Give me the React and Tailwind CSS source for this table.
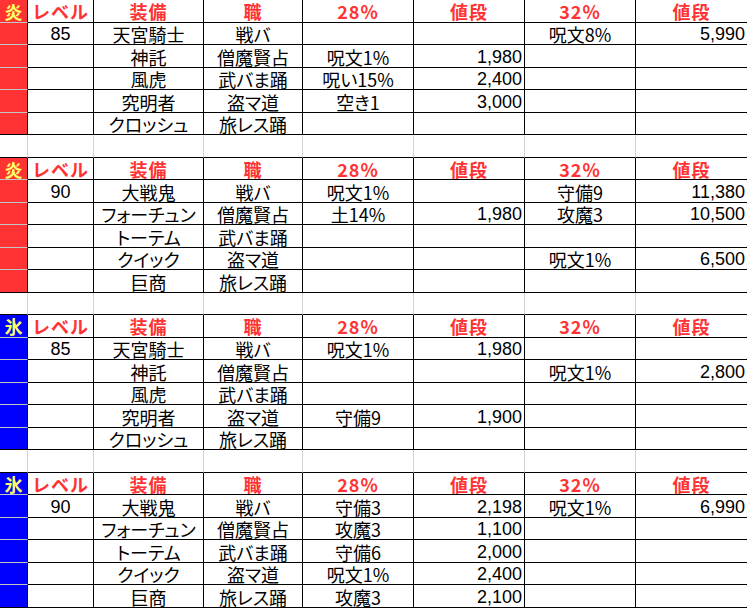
import React from 'react';

const blocks = [
  {
    mark: '炎',
    level: '85',
    rows: [
      ['天宮騎士', '戦バ', '', '', '呪文8%', '5,990'],
      ['神託', '僧魔賢占', '呪文1%', '1,980', '', ''],
      ['風虎', '武バま踊', '呪い15%', '2,400', '', ''],
      ['究明者', '盗マ道', '空き1', '3,000', '', ''],
      ['クロッシュ', '旅レス踊', '', '', '', ''],
    ],
  },
  {
    mark: '炎',
    level: '90',
    rows: [
      ['大戦鬼', '戦バ', '呪文1%', '', '守備9', '11,380'],
      ['フォーチュン', '僧魔賢占', '土14%', '1,980', '攻魔3', '10,500'],
      ['トーテム', '武バま踊', '', '', '', ''],
      ['クイック', '盗マ道', '', '', '呪文1%', '6,500'],
      ['巨商', '旅レス踊', '', '', '', ''],
    ],
  },
  {
    mark: '氷',
    level: '85',
    rows: [
      ['天宮騎士', '戦バ', '呪文1%', '1,980', '', ''],
      ['神託', '僧魔賢占', '', '', '呪文1%', '2,800'],
      ['風虎', '武バま踊', '', '', '', ''],
      ['究明者', '盗マ道', '守備9', '1,900', '', ''],
      ['クロッシュ', '旅レス踊', '', '', '', ''],
    ],
  },
  {
    mark: '氷',
    level: '90',
    rows: [
      ['大戦鬼', '戦バ', '守備3', '2,198', '呪文1%', '6,990'],
      ['フォーチュン', '僧魔賢占', '攻魔3', '1,100', '', ''],
      ['トーテム', '武バま踊', '守備6', '2,000', '', ''],
      ['クイック', '盗マ道', '呪文1%', '2,400', '', ''],
      ['巨商', '旅レス踊', '攻魔3', '2,100', '', ''],
    ],
  },
];

const widths = ['w-[28px]', 'w-[66px]', 'w-[110px]', 'w-[99px]', 'w-[111px]', 'w-[111px]', 'w-[111px]', 'w-[112px]'];
const headers = ['レベル', '装備', '職', '28%', '値段', '32%', '値段'];

const jp = "font-['MS_PGothic','Noto_Sans_CJK_JP',sans-serif]";
const num = "font-['Liberation_Sans','Arial',sans-serif]";

function Row({ h, children }) {
  return <div className={`flex shrink-0 ${h ? 'h-[23px]' : 'h-[22px]'}`}>{children}</div>;
}

export default function App() {
  let r = 0;
  const out = [];

  blocks.forEach((b, bi) => {
    const fill = b.mark === '炎' ? 'bg-[#ff3333]' : 'bg-[#0000ff]';

    // header row
    out.push(
      <Row key={`h${bi}`} h={r++ % 2 === 0}>
        <div className={`${widths[0]} ${fill} shrink-0 flex items-center justify-center pt-px border-r border-b border-r-black border-b-[#c4c4c4] text-[#ffff66] text-[18px] leading-[19px] font-bold ${jp}`}>
          {b.mark}
        </div>
        {headers.map((t, i) => (
          <div
            key={i}
            className={`${widths[i + 1]} shrink-0 flex items-center justify-center pt-px border-r border-b border-black text-[#ff3333] text-[18px] leading-[19px] font-bold tracking-[1px] ${jp}`}
          >
            {t}
          </div>
        ))}
      </Row>
    );

    // data rows
    b.rows.forEach((row, ri) => {
      out.push(
        <Row key={`d${bi}-${ri}`} h={r++ % 2 === 0}>
          <div className={`${widths[0]} ${fill} shrink-0 border-r border-b border-r-black ${ri === 4 ? 'border-b-black' : 'border-b-[#c4c4c4]'}`} />
          <div className={`${widths[1]} shrink-0 flex items-center justify-center pt-[2px] border-r border-b border-black text-[18px] leading-[19px] text-black ${num}`}>
            {ri === 0 ? b.level : ''}
          </div>
          {row.map((t, i) => {
            const right = i === 3 || i === 5;
            return (
              <div
                key={i}
                className={`${widths[i + 2]} shrink-0 flex items-center pt-[2px] border-r border-b border-black text-[18px] leading-[19px] text-black whitespace-nowrap ${
                  right ? `justify-end pr-[2px] ${num}` : `justify-center ${jp} [font-feature-settings:'palt']`
                }`}
              >
                {t}
              </div>
            );
          })}
        </Row>
      );
    });

    // blank spacer row
    if (bi < blocks.length - 1) {
      out.push(
        <Row key={`b${bi}`} h={r++ % 2 === 0}>
          {widths.map((w, i) => (
            <div key={i} className={`${w} shrink-0 bg-white border-r border-b border-r-[#d4d4d4] border-b-black`} />
          ))}
        </Row>
      );
    }
  });

  return (
    <div className="w-[747px] h-[609px] overflow-hidden bg-white flex flex-col">
      {out}
    </div>
  );
}
